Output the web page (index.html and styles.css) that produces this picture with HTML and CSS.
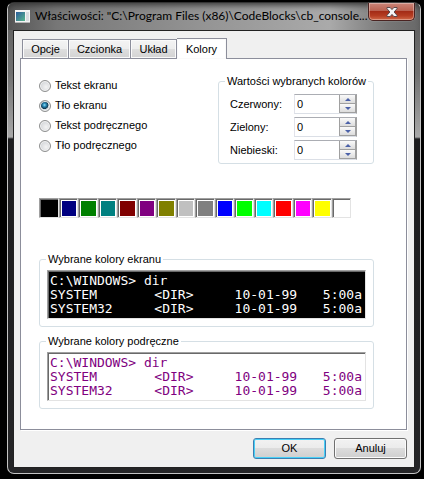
FILE: index.html
```html
<!DOCTYPE html>
<html lang="pl">
<head>
<meta charset="utf-8">
<title>Właściwości</title>
<link rel="stylesheet" href="styles.css">
</head>
<body>
<main class="window">
  <header class="titlebar">
    <svg class="app-icon" width="15" height="13" viewBox="0 0 15 13" aria-hidden="true">
      <defs><linearGradient id="pane" x1="0" y1="0" x2="1" y2="1"><stop offset="0" stop-color="#2c5d9c"/><stop offset="1" stop-color="#58b68c"/></linearGradient></defs>
      <rect width="15" height="13" fill="#f4f4f4"/>
      <rect x="1" y="2" width="9" height="9" fill="url(#pane)"/>
      <rect x="11" y="2" width="3" height="9" fill="#d9dce0"/>
      <rect y="12" width="15" height="1" fill="#b5b5b5"/>
    </svg>
    <h1 class="title">Właściwości: "C:\Program Files (x86)\CodeBlocks\cb_console...</h1>
    <button class="close" type="button" aria-label="Zamknij">
      <svg width="12" height="10" viewBox="0 0 12 10" aria-hidden="true">
        <path d="M1 .5h3.2L6 2.6 7.800 .5H11v1.200L8.100 5 11 8.300v1.200H7.800L6 7.400 4.200 9.500H1V8.300L3.900 5 1 1.700z" fill="#f5f5f5" stroke="#5b4a4e" stroke-width="1"/>
      </svg>
    </button>
  </header>
  <form class="client">
    <div class="tabs" role="tablist">
      <button class="tab tab-options" type="button" role="tab">Opcje</button>
      <button class="tab tab-font" type="button" role="tab">Czcionka</button>
      <button class="tab tab-layout" type="button" role="tab">Układ</button>
      <button class="tab tab-active" type="button" role="tab" aria-selected="true">Kolory</button>
    </div>
    <section class="panel">
      <div class="top">
        <div class="radios">
          <label class="radio"><input type="radio" name="target">Tekst ekranu</label>
          <label class="radio"><input type="radio" name="target" checked>Tło ekranu</label>
          <label class="radio"><input type="radio" name="target">Tekst podręcznego</label>
          <label class="radio"><input type="radio" name="target">Tło podręcznego</label>
        </div>
        <fieldset class="group values">
          <legend>Wartości wybranych kolorów</legend>
          <div class="value-row">
            <label for="red">Czerwony:</label>
            <div class="spin"><input id="red" type="text" inputmode="numeric" value="0"><span class="arrows"><button class="up" type="button" aria-label="+"></button><button class="down" type="button" aria-label="-"></button></span></div>
          </div>
          <div class="value-row">
            <label for="green">Zielony:</label>
            <div class="spin"><input id="green" type="text" inputmode="numeric" value="0"><span class="arrows"><button class="up" type="button" aria-label="+"></button><button class="down" type="button" aria-label="-"></button></span></div>
          </div>
          <div class="value-row">
            <label for="blue">Niebieski:</label>
            <div class="spin"><input id="blue" type="text" inputmode="numeric" value="0"><span class="arrows"><button class="up" type="button" aria-label="+"></button><button class="down" type="button" aria-label="-"></button></span></div>
          </div>
        </fieldset>
      </div>
      <div class="swatches">
        <button class="swatch selected" type="button"></button>
        <button class="swatch navy" type="button"></button>
        <button class="swatch green" type="button"></button>
        <button class="swatch teal" type="button"></button>
        <button class="swatch maroon" type="button"></button>
        <button class="swatch purple" type="button"></button>
        <button class="swatch olive" type="button"></button>
        <button class="swatch silver" type="button"></button>
        <button class="swatch gray" type="button"></button>
        <button class="swatch blue" type="button"></button>
        <button class="swatch lime" type="button"></button>
        <button class="swatch aqua" type="button"></button>
        <button class="swatch red" type="button"></button>
        <button class="swatch fuchsia" type="button"></button>
        <button class="swatch yellow" type="button"></button>
        <button class="swatch white" type="button"></button>
      </div>
      <fieldset class="group sample">
        <legend>Wybrane kolory ekranu</legend>
        <div class="console screen">
          <div class="line"><span class="command">C:\WINDOWS&gt; dir</span></div>
          <div class="line"><span>SYSTEM</span><span>&lt;DIR&gt;</span><span>10-01-99</span><span>5:00a</span></div>
          <div class="line"><span>SYSTEM32</span><span>&lt;DIR&gt;</span><span>10-01-99</span><span>5:00a</span></div>
        </div>
      </fieldset>
      <fieldset class="group sample">
        <legend>Wybrane kolory podręczne</legend>
        <div class="console popup">
          <div class="line"><span class="command">C:\WINDOWS&gt; dir</span></div>
          <div class="line"><span>SYSTEM</span><span>&lt;DIR&gt;</span><span>10-01-99</span><span>5:00a</span></div>
          <div class="line"><span>SYSTEM32</span><span>&lt;DIR&gt;</span><span>10-01-99</span><span>5:00a</span></div>
        </div>
      </fieldset>
    </section>
    <footer class="actions">
      <button class="action default" type="button">OK</button>
      <button class="action" type="button">Anuluj</button>
    </footer>
  </form>
</main>
</body>
</html>
```
FILE: styles.css
```css
* { box-sizing: border-box; }
html { background: #000; }
body {
  margin: 0;
  padding: 2px 3px 5px 7px;
  font: 11px/15px "Liberation Sans", Arial, sans-serif;
  color: #000;
}
button, input { font: inherit; color: inherit; margin: 0; padding: 0; }

/* Window frame */
.window {
  border: 1px solid #c4c4c4;
  border-top-color: #333;
  border-radius: 7px;
  padding: 0 5px 5px;
  background: linear-gradient(#5a5a5a 0, #6c6c6c 50px, #707070 70px, #a8a8a8 134px, #1d1d1f 136px, #252527 100%);
}
.titlebar {
  display: flex;
  align-items: flex-start;
  height: 27px;
  margin: 0 -5px;
  padding: 0 5px 0 7px;
  border-radius: 6px 6px 0 0;
  background: linear-gradient(90deg, #555 0, #777 12%, #969696 50%, #aaa 78%, #777 92%, #686868 100%);
  box-shadow: inset 0 5px 6px -3px #333;
}
.app-icon { flex: none; margin-top: 7px; }
.title {
  flex: 1;
  margin: 4px 0 0 5px;
  font: 12px/18px Lato, "Open Sans", sans-serif;
  white-space: nowrap;
  min-width: 0;
}
.close {
  display: flex;
  align-items: center;
  justify-content: center;
  flex: none;
  width: 47px;
  height: 18px;
  border: 1px solid #4a2321;
  border-top: 0;
  border-radius: 0 0 5px 5px;
  background: linear-gradient(#cb8579 0, #b9604f 48%, #a42c17 50%, #b53d22 75%, #d06a4a 100%);
  box-shadow: inset 0 0 0 1px #ffffff55, 0 0 1px #ddd;
}
.client {
  margin: 0;
  border: 1px solid #ddd;
  outline: 1px solid #222;
  outline-offset: -1px;
  padding: 7px 7px 8px 6px;
  background: #f0f0f0;
}

/* Tabs */
.tabs { display: flex; align-items: flex-end; padding-left: 2px; }
.tab {
  height: 19px;
  border: 1px solid #8c8e9b;
  border-bottom: 0;
  border-left-width: 0;
  padding: 0;
  background: linear-gradient(#f4f4f4 0, #ededed 50%, #dedede 51%, #d3d3d3 100%);
  box-shadow: inset 0 0 0 1px #fafafa;
}
.tab-options { width: 47px; border-left-width: 1px; }
.tab-font { width: 62px; }
.tab-layout { width: 46px; }
.tab-active {
  width: 50px;
  height: 21px;
  margin-bottom: -1px;
  background: #fff;
  z-index: 1;
}
.panel {
  border: 1px solid #8c8e9b;
  padding: 15px 32px 20px 18px;
  background: #fff;
  box-shadow: 1px 1px #fff;
}

/* Top controls */
.top { display: flex; justify-content: space-between; align-items: flex-start; }
.radios { display: flex; flex-direction: column; gap: 5px; padding-top: 4px; }
.radio { display: flex; align-items: center; gap: 4px; }
.radio input {
  appearance: none;
  width: 12px;
  height: 12px;
  border: 1px solid #8e8f8f;
  border-radius: 50%;
  background: radial-gradient(circle at 60% 60%, #f4f4f4 0, #c5c9cd 100%);
  box-shadow: inset 0 0 0 1px #f4f4f4;
}
.radio input:checked {
  background: radial-gradient(circle at 45% 40%, #8fe0f8 0, #2a8cba 20%, #12384f 45%, #d0d8dd 52%);
}
.group {
  min-width: 0;
  margin: 0;
  border: 1px solid #d5dfe5;
  border-radius: 3px;
}
.group legend { padding: 0 2px; white-space: nowrap; }
.values {
  display: flex;
  flex-direction: column;
  gap: 3px;
  width: 156px;
  padding: 5px 16px 3px 11px;
}
.values legend { margin-left: -5px; }
.value-row { display: flex; align-items: center; justify-content: space-between; }
.spin {
  display: flex;
  width: 63px;
  height: 20px;
  border: 1px solid;
  border-color: #abadb3 #a0a0a0 #dbdfe6 #e2e3ea;
  background: #fff;
}
.spin input { flex: 1; min-width: 0; border: 0; padding-left: 2px; background: none; outline: 0; }
.arrows {
  display: flex;
  flex-direction: column;
  width: 17px;
  border: 1px solid #a0a0a0;
  border-top: 0;
}
.arrows button {
  display: flex;
  align-items: center;
  justify-content: center;
  flex: 1;
  border: 0;
  background: linear-gradient(#fafafa, #dcdcdc);
}
.arrows .down { border-top: 1px solid #a0a0a0; }
.arrows button::before {
  content: "";
  border: 3px solid transparent;
  border-top-width: 0;
  border-bottom: 3px solid #4b61a8;
}
.arrows .down::before { border-top: 3px solid #4b61a8; border-bottom-width: 0; }

/* Palette */
.swatches {
  display: grid;
  grid-template-columns: repeat(16, 1fr);
  max-width: 312px;
  margin: 34px 0;
}
.swatch {
  height: 20px;
  border: 1px solid;
  border-color: #a0a0a0 #e3e3e3 #e3e3e3 #a0a0a0;
  padding: 2px 1px 1px 2px;
  background: #fff content-box;
  box-shadow: inset 1px 1px #696969;
}
.selected { padding: 0; background-color: #000; }
.navy { background-color: #000080; }
.green { background-color: #008000; }
.teal { background-color: #008080; }
.maroon { background-color: #800000; }
.purple { background-color: #800080; }
.olive { background-color: #808000; }
.silver { background-color: #c0c0c0; }
.gray { background-color: #808080; }
.blue { background-color: #00f; }
.lime { background-color: #0f0; }
.aqua { background-color: #0ff; }
.red { background-color: #f00; }
.fuchsia { background-color: #f0f; }
.yellow { background-color: #ff0; }

/* Console samples */
.sample { padding: 3px 7px 7px; }
.sample + .sample { margin-top: 7px; }
.sample legend { margin-left: -1px; }
.console {
  height: 49px;
  border: 1px solid;
  border-color: #a0a0a0 #e3e3e3 #e3e3e3 #a0a0a0;
  padding: 3px 2px;
  box-shadow: inset 1px 1px #696969;
  font: 13px/14px "DejaVu Sans Mono", monospace;
  white-space: nowrap;
}
.screen { background: #000; color: #fff; }
.popup { background: #fff; color: #800080; }
.line { display: grid; grid-template-columns: 13fr 10fr 11fr 5fr; }
.command { grid-column: 1 / -1; }

/* Dialog buttons */
.actions { display: flex; justify-content: flex-end; gap: 8px; margin-top: 8px; }
.action {
  width: 73px;
  height: 21px;
  border: 1px solid #707070;
  border-radius: 3px;
  background: linear-gradient(#f2f2f2 0, #ebebeb 49%, #dcdcdc 50%, #cfcfcf 100%);
  box-shadow: inset 0 0 0 1px #fbfbfb;
}
.default { border-color: #3c7fb1; box-shadow: inset 0 0 0 1px #48d0f7; }
```
